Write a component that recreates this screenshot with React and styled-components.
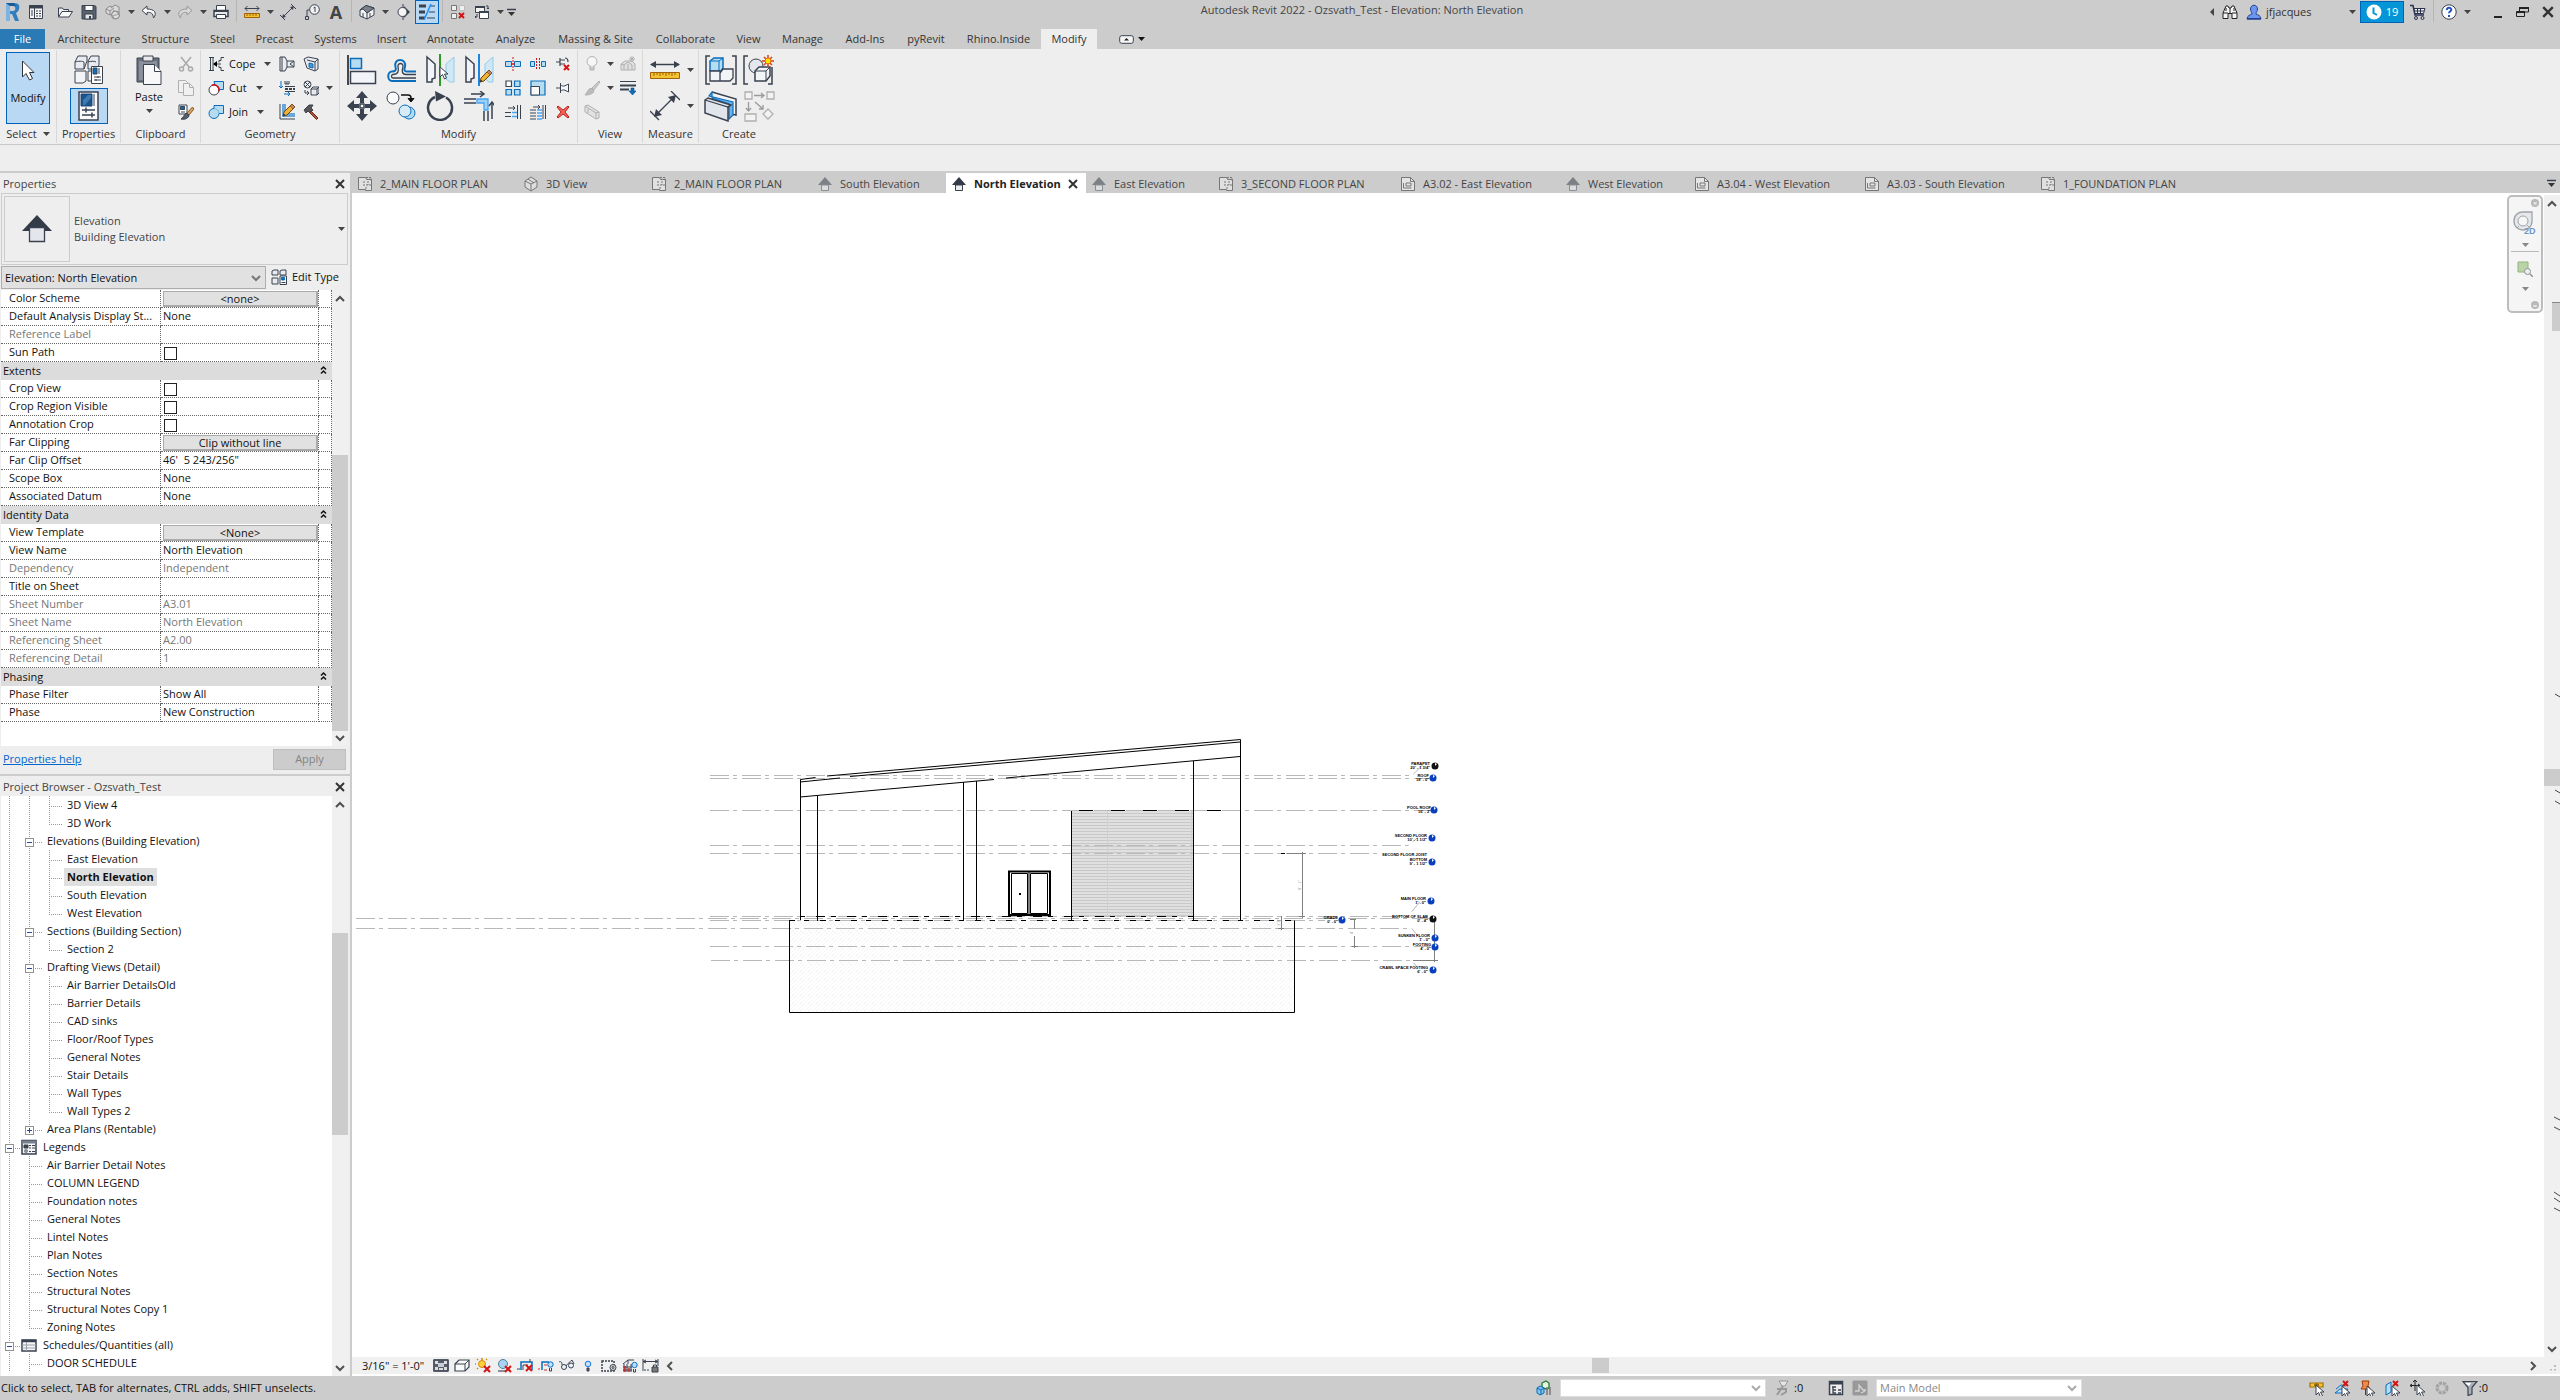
import React, { useState } from "react";
import styled, { createGlobalStyle, css } from "styled-components";

const INK = "#3a4250";
const BLUE = "#0a6ebd";
const SKY = "#b5dcf0";
const PALE = "#e9ebf0";
const GREY = "#b0b0b0";

/* ---------- icons ---------- */

const Svg = ({ s = 16, w, h, children }) => (
  <svg width={w || s} height={h || s} viewBox={`0 0 ${w || s} ${h || s}`} fill="none" stroke={INK} aria-hidden="true">
    {children}
  </svg>
);

const Caret = ({ color = "#444" }) => (
  <svg width="7" height="4" viewBox="0 0 7 4" aria-hidden="true"><path d="M0 0h7L3.500 4z" fill={color} /></svg>
);

const Chevron = ({ dir = "down", color = "#505050" }) => {
  const d = { down: "M1 3l4 4 4-4", up: "M1 7l4-4 4 4", left: "M7 1L3 5l4 4", right: "M3 1l4 4-4 4" }[dir];
  return <svg width="10" height="10" viewBox="0 0 10 10" fill="none" aria-hidden="true"><path d={d} stroke={color} strokeWidth="2" /></svg>;
};

const Cross = ({ size = 10, color = "#333" }) => (
  <svg width={size} height={size} viewBox="0 0 10 10" aria-hidden="true"><path d="M1 1l8 8M9 1L1 9" stroke={color} strokeWidth="2" /></svg>
);

const redX = (x, y, n = 6) => <path d={`M${x} ${y}l${n} ${n}M${x + n} ${y}l${-n} ${n}`} stroke="#d21414" strokeWidth="2" />;
const pointer = (x, y) => (
  <path transform={`translate(${x} ${y})`} d="M0 0v10l2.500-2.500L4.500 12l2-1-2-4H8z" fill="#fff" stroke={INK} strokeWidth="1" />
);
const pencil = (x, y) => (
  <g transform={`translate(${x} ${y})`}>
    <path d="M1 13l1-4 8-8 3 3-8 8z" fill="#f0b030" stroke="#6b4410" />
    <path d="M8 3l3 3 2-2-3-3z" fill="#c9806a" stroke="#6b4410" strokeWidth=".6" /><path d="M1 13l1-2 1 1z" fill="#222" />
  </g>
);

const I = {
  logo: (
    <Svg w={18} h={20}>
      <path d="M3 1h8c5 0 6 3 5 6 0 2-2 3-3 4l3 8h-4l-3-7H7v7H3z" fill="#2f7ec0" stroke="none" />
      <path d="M7 4h3c3 0 3 5 0 5H7z" fill="#cdcdcd" stroke="none" />
      <path d="M3 1l4 3v15H3z" fill="#7db3e0" stroke="none" /><path d="M3 1h8l2 3H7z" fill="#1b5a99" stroke="none" />
    </Svg>
  ),
  home: <Svg><path d="M1.500 1.500h13v13h-13z" fill="#f4f4f4" /><path d="M1 3h14" strokeWidth="3" /><path d="M6.500 4v10M3 7h2M3 9h2M3 11h2M8 7h2M11 7h2M8 9.500h2M11 9.500h2M8 12h2M11 12h2" /></Svg>,
  open: <Svg><path d="M1.500 13V4h4l1 1.500h5V8" fill="#ededed" /><path d="M1.500 13L5 7.500h10.500L12 13z" fill="#fafafa" /></Svg>,
  save: <Svg><path d="M1 1.500h12.500l1.500 1V15H1z" fill="#59616f" /><path d="M4 1.500h8v5H4z" fill="#fff" /><path d="M4 10h8v5H4z" fill="#e6e6e6" /><path d="M9 12v3" strokeWidth="2" /></Svg>,
  sync: <Svg><g stroke="#8c8c8c" fill="#d9d9d9"><path d="M1 5l4-3 4 2v5l-4 2-4-2z" /><path d="M6 4l4-3 4 2v6" /><path d="M1 5l4 2 4-3M5 7v4" /><circle cx="10.500" cy="11" r="4" fill="#aaa" /><path d="M8 11a2 2 0 0 1 4-1M13 11a2 2 0 0 1-4 1" stroke="#eee" /></g></Svg>,
  undo: <Svg><path d="M6 2L1 6.500 6 11V8.500c4-.5 6 .5 6.500 5.500 4-5 1-9-6.500-9z" fill="#fafafa" /></Svg>,
  redo: <Svg><path d="M10 2l5 4.500L10 11V8.500c-4-.5-6 .5-6.500 5.500C-.5 9 2.500 5 10 5z" fill="#d8d8d8" stroke="#999" /></Svg>,
  print: <Svg><path d="M3.500 6V1.500h9V6" fill="#fff" /><path d="M1 6.500h14v6H1z" fill="#e8e8e8" strokeWidth="1.500" /><path d="M3.500 10.500h9v4h-9z" fill="#fff" /><path d="M1 7h14" strokeWidth="2" /></Svg>,
  measure: <Svg><path d="M1 4.500h14M3.500 2L1 4.500 3.500 7M12.500 2L15 4.500 12.500 7" /><path d="M.5 9.500h15v4H.5z" fill="#f1c232" stroke="#a4610a" /><path d="M3 10v2M6 10v2M9 10v2M12 10v2" stroke="#a4610a" /></Svg>,
  dim: <Svg><path d="M3 13L13 3M0 11l5 5M11 0l5 5" /><path d="M2 14l1-4 3 3zM14 2l-1 4-3-3z" fill={INK} stroke="none" /></Svg>,
  tag: <Svg><circle cx="10.500" cy="5.500" r="4.800" fill="#f1f1f1" /><path d="M9.500 4l1.500-1v5M5.500 6H3v7M1.500 12.500h3v3h-3z" /></Svg>,
  house: <Svg><path d="M1 6l6-4.500L15 4v7l-7 4-7-3z" fill="#f2f2f4" /><path d="M1 6l3-2 4 5v6M8 9l7-5M4 9v4M11 9v4" /><path d="M1 6l3-1 4 4 7-5-8-2.500z" fill="#7b828e" /></Svg>,
  section: <Svg w={14}><path d="M7 0v16" /><path d="M8 2l6 6-6 6z" fill={INK} stroke="none" /><circle cx="6.500" cy="8" r="4.500" fill="#f4f4f4" /></Svg>,
  thin: <Svg w={18}><path d="M1 2h7M1 8h6M1 14h6" strokeWidth="3" /><path d="M12 2h5M11 8h6M9 14h8" /><path d="M13 0L6 16" stroke="#1e90ff" strokeWidth="1.500" /></Svg>,
  closeHidden: <Svg><path d="M1.500 1.500h5v5h-5zM1.500 9.500h5v5h-5z" fill="#efefef" stroke="#777" /><path d="M9.500 1.500h5v5h-5z" fill="#efefef" stroke="#bbb" />{redX(9, 9, 5)}</Svg>,
  switchWin: <Svg><path d="M1.500 2.500h9v6h-9z" fill="#f2f2f2" /><path d="M5.500 7.500h9v7h-9z" fill="#fff" /><path d="M5 8h10M1 3h10" strokeWidth="2" /><path d="M12 2h2v3M13 4l1 1 1-1M3 10v3h-2M2 12l-1 1 1 1" /></Svg>,
  customize: <Svg w={10} h={9}><path d="M0 1.500h9" strokeWidth="1.500" /><path d="M1 4h7L4.500 8z" fill="#333" stroke="none" /></Svg>,
  binoc: <Svg><path d="M1 9L4 2h2l1 2h2l1-2h2l3 7v5.500h-5V9.500H6v5H1z" fill="#f5f5f5" stroke="#222" /><path d="M1 9h5M10 9h5M4 4v3M12 4v3M8 4v5" stroke="#222" /></Svg>,
  user: <Svg><path d="M4.500 5c0-5 7-5 7 0 0 2-1 3-1.500 4v1c2 1 4.500 1.500 5 4.500H1c.5-3 3-3.500 5-4.500V9C5.500 8 4.500 7 4.500 5z" fill="#6c97f0" stroke="#23418e" /><path d="M1 15h14" stroke="#23418e" strokeWidth="1.500" /></Svg>,
  clock: <Svg><circle cx="8" cy="8" r="7.500" fill="#fff" stroke="none" /><path d="M7.500 3.500V9l3.500 2" stroke="#0696d7" strokeWidth="2" /></Svg>,
  cart: <Svg><path d="M0 1.500h3l2 9.500h9" stroke="#2a3050" strokeWidth="1.500" /><path d="M4 4.500h11l-1.500 5H5z" fill="#f1f1f1" stroke="#2a3050" /><path d="M7.500 5v4M10.500 5v4M4 7h10" stroke="#2a3050" /><circle cx="6" cy="14" r="1.500" stroke="#2a3050" /><circle cx="12.500" cy="14" r="1.500" stroke="#2a3050" /></Svg>,
  help: <Svg><circle cx="8" cy="8" r="7.200" fill="#fff" /><path d="M5.800 6c0-3 4.500-3 4.500-.3 0 1.500-2.300 1.600-2.300 3.600" stroke="#1f54c4" strokeWidth="2" /><path d="M8 11v2" stroke="#1f54c4" strokeWidth="2" /></Svg>,
  min: <Svg w={10} h={12}><path d="M1 11h8" stroke="#222" strokeWidth="2" /></Svg>,
  restore: <Svg w={13} h={12}><path d="M3.500 6V1.500h9V6H9" stroke="#222" /><path d="M3 2h10M1 6h8" stroke="#222" strokeWidth="2" /><path d="M.5 5.500h8v5h-8z" stroke="#222" /></Svg>,
  cursor: <Svg w={14} h={22}><path d="M1.500 1v16l3.500-3.500L8.500 20l3-1.500-3-6H13z" fill="#fff" stroke="#333" /></Svg>,
  typeProps: (
    <Svg w={30} h={30}>
      <path d="M4 1h9v5l-3 8H1V7z" fill={PALE} /><path d="M17 1h8v9l-3 4h-8V6z" fill={PALE} /><path d="M1 7c3-1 8-1 9 0v7M14 7c3-1 7-1 8 0" />
      <path d="M1 16h11v10l-3 2H1zM14 16h10v10H14z" fill="#f3f4f7" /><path d="M17.500 11.500h11v17h-11z" fill="#fff" />
      <path d="M19 13h4v6h-4z" fill={BLUE} /><path d="M25 13v6M20 22h7M20 25h7M24 21v2M22 24v2" />
    </Svg>
  ),
  props: (
    <Svg w={21} h={30}>
      <path d="M1 1h19v28H1z" fill="#fbfbfb" strokeWidth="1.500" /><path d="M3 3h11v12H3z" fill="#1f5285" stroke="#174a80" /><path d="M16 3v12" stroke="#9a9fa8" strokeWidth="2" />
      <path d="M5 9l5-5h3v3l-6 7H5z" fill="#3d7ab2" stroke="none" /><path d="M4 19h13M4 24h13M8 16.500v5M14 21.500v5" strokeWidth="1.500" />
    </Svg>
  ),
  paste: (
    <Svg w={26} h={30}>
      <path d="M1 3h22v24H1z" fill="#6a717e" /><path d="M3 6h18v19H3z" fill="#8a909b" stroke="none" /><path d="M7 1h10v5H7z" fill="#e9e9e9" />
      <path d="M7.500 9.500h11l6.500 7v13H7.500z" fill="#f7f7f9" /><path d="M18.500 9.500v7H25" fill="#fff" />
    </Svg>
  ),
  cut: <Svg><g stroke="#a9a9a9" strokeWidth="1.500"><path d="M3 1l8 10M13 1L5 11" /><circle cx="3.500" cy="13" r="2" /><circle cx="12.500" cy="13" r="2" /></g></Svg>,
  copy: <Svg><g stroke={GREY} fill="#f0f0f0"><path d="M.5.500h7l3 3v9H.5z" /><path d="M5.500 3.500h6l4 4v8h-10zM11.500 3.500v4h4" /></g></Svg>,
  match: <Svg><path d="M1 1h8v9H1z" fill="#fff" /><path d="M2.500 2.500h4v3h-4z" fill={BLUE} /><path d="M3 8h4" /><path d="M14.500 3L9 9l2 2 5-6z" fill="#d9a066" stroke="#8c5a20" /><path d="M8 9l3 2c0 3-4 5-8 4 2-1 3-4 5-6z" fill="#555d6b" /></Svg>,
  cope: <Svg><path d="M1 1.500h5M1 14.500h5M2.500 2v12M5 2v12M16 1.500h-3v3h-2v2M16 14.500h-3v-3h-2v-2M6 8h7" /><path d="M5 8l4-3v6z" fill="#000" stroke="none" /></Svg>,
  cutGeo: <Svg><path d="M6 1.500h9.500v8H8z" fill={SKY} stroke={BLUE} /><circle cx="6" cy="10" r="5" fill="#fff" /><path d="M4 5.300a5 5 0 0 1 6.800 6" stroke="#d21414" strokeWidth="1.500" /></Svg>,
  join: <Svg><path d="M6 1.500h9.500v8H11a5 5 0 1 1-5-5z" fill={SKY} stroke={BLUE} /><path d="M6 4.500a5 5 0 0 1 5 5" stroke="#6fb3de" /></Svg>,
  wallJoin: <Svg><path d="M1 1h5l2 4h7v6H8l-2 4H1z" fill={PALE} /><path d="M3 1v14M8 5v6M15 5l-4 3 4 3" /></Svg>,
  face: <Svg><path d="M1 3l4-2 10 2v10l-3 2-8-3z" fill={PALE} /><path d="M4 4l8 2v9M12 6l3-3" /><path d="M6 7l4 1v4l-4-1z" fill="#4a97d0" stroke={BLUE} /></Svg>,
  beamJoin: <Svg><path d="M6 6.500h10M6 11.500h10" /><path d="M6 9h10" strokeWidth="2" strokeDasharray="3 1" /><path d="M2 1v7M0 6l2 2 2-2M5 14h6M9 12l2 2-2 2" stroke={BLUE} /><path d="M6 1v3h2V1M8 4h2V1" /></Svg>,
  splitFace: <Svg><circle cx="4.500" cy="4.500" r="3.500" fill="#eee" /><path d="M2 2l5 5M7 2L2 7M2 10v3h4M4 11l2 2-2 2" /><path d="M8 9l2-2h6v6l-2 2H8z" fill={PALE} /><path d="M8 9h6v6M14 9l2-2" /></Svg>,
  paint: <Svg><path d="M1 0v15h15" /><path d="M4 0v12h12M6 0v10h10" stroke="#3c8fd0" strokeWidth="1.500" />{pencil(3, -1)}</Svg>,
  hammer: <Svg><path d="M1 6l5-5h4L8 4l2 2-3 3-2-2-2 2z" fill="#555" /><path d="M8 7l7 7-1.500 1.500L7 9z" fill="#b4543a" stroke="#6b2b1b" /></Svg>,
  align: <Svg s={30}><path d="M1 0v30" stroke="#111" strokeWidth="1.500" /><path d="M3.500 3.500h11v10h-11z" fill={SKY} stroke={BLUE} strokeWidth="1.500" /><path d="M3.500 16.500h25v12h-25z" fill="#f3f4f7" strokeWidth="1.500" /></Svg>,
  offset: (
    <Svg w={30} h={28}>
      <path d="M30 15.500h-9c-3 0-3-2-2-4.500C21 1.500 7 1.500 9.500 11c1 3 0 4.500-3.500 4.500-5 0-5 9.500 0 9.500h24" stroke={BLUE} strokeWidth="2" />
      <path d="M30 18.500H20c-4.500 0-4-4-3-8 .5-4-5.500-4-5 0 1 5 0 8-5 8-2 0-2 3.500 0 3.500h23" strokeWidth="1.300" />
    </Svg>
  ),
  mirrorPick: <Svg w={30} h={32}><path d="M2 3l8 7v14l-3 1v3H2z" fill="#f3f4f7" strokeWidth="1.500" /><path d="M29 3l-8 7v15l4 3h4z" fill="#cfe8f5" stroke="#93cbea" /><path d="M15 0v32" stroke="#2a9a20" strokeWidth="2" />{pointer(15, 13)}</Svg>,
  mirrorDraw: <Svg w={30} h={32}><path d="M2 3l8 7v14l-3 1v3H2z" fill="#f3f4f7" strokeWidth="1.500" /><path d="M29 3l-8 7v15l4 3h4z" fill="#cfe8f5" stroke="#93cbea" /><path d="M15 0v32" stroke="#1b86e0" strokeWidth="2" />{pencil(15, 15)}</Svg>,
  move: <Svg s={30}><g fill={INK} stroke="none"><path d="M15 0l6 7h-4v5h-4V7H9zM15 30l6-7h-4v-5h-4v5H9zM0 15l7-6v4h5v4H7v4zM30 15l-7-6v4h-5v4h5v4z" /></g><path d="M13 13h4v4h-4z" fill="#fff" strokeWidth="1.500" /></Svg>,
  copyTool: <Svg s={30}><circle cx="7" cy="7" r="6" fill="#fafafa" /><path d="M15 4h7c2 0 3 1 3 3v3" stroke="#111" strokeWidth="1.500" /><path d="M22 7.500l3 3.500 3-3.500z" fill="#111" stroke="#111" /><circle cx="23" cy="22" r="6" fill={SKY} stroke={BLUE} /><circle cx="19" cy="20" r="6" fill="#d5ecf8" stroke={BLUE} /></Svg>,
  rotate: <Svg s={30}><path d="M21 6.500a12 12 0 1 1-11-.5" strokeWidth="2.500" /><path d="M10 0l11 5.500-10 5z" fill={INK} stroke="none" /></Svg>,
  trim: (
    <Svg s={30}>
      <path d="M0 8h12M0 12h12M20 20v10M24 20v10" strokeWidth="1.500" /><path d="M13 8h11v11h-4v-7h-7z" fill="#9fd0f5" stroke="#46a5f5" strokeWidth="1.300" />
      <path d="M7 3h13M28 28V12" strokeWidth="1.500" /><path d="M16 0l4 3-4 3M25 15l3-4 3 4" strokeWidth="1.500" />
    </Svg>
  ),
  split: <Svg><path d="M.5 5.500h6v5h-6zM9.500 5.500h6v5h-6z" fill={SKY} stroke={BLUE} /><path d="M8 1v14" stroke="#d21414" strokeDasharray="2 1" /><path d="M6 8h4" stroke="#d21414" /></Svg>,
  splitGap: <Svg><path d="M.5 5.500h4v5h-4zM11.500 5.500h4v5h-4z" fill={SKY} stroke={BLUE} /><path d="M6.500 2v12M9.500 2v12" stroke="#d21414" strokeDasharray="2 1" /></Svg>,
  unpin: <Svg><path d="M1 6h4M5 2v8M5 4h5M5 8h5M10 2c2 0 3 1 3 4" strokeWidth="1.200" />{redX(9, 9, 5)}</Svg>,
  array: <Svg><g strokeWidth="1.200"><path d="M1 1h5.500v5.500H1z" fill="#fff" /><g fill={SKY} stroke={BLUE}><path d="M9.500 1H15v5.500H9.500zM1 9.500h5.500V15H1zM9.500 9.500H15V15H9.500z" /></g></g></Svg>,
  scale: <Svg><path d="M1 1h14v14H1z" fill={SKY} stroke={BLUE} strokeWidth="1.200" /><path d="M1 6.500h8.500V15H1z" fill="#fafafa" /></Svg>,
  pin: <Svg><path d="M1 8h4M5.500 3v10M5.500 5c3 2 4 1 8-1v8c-4-2-5-3-8-1" fill="#f6f6f6" /></Svg>,
  trimOne: <Svg><path d="M0 8.500h6M0 12.500h6M12.500 1v14M15.500 1v14M3 4h7M8 2l2 2-2 2" /><path d="M7 8.500h5M7 12.500h5" stroke="#46a5f5" strokeWidth="1.500" /></Svg>,
  trimMany: <Svg><path d="M0 6h6M0 9h6M0 12h6M0 15h6M13 1v14M15.500 1v14M3 3h7M8 1l2 2-2 2" /><path d="M7 6h5M7 9h5M7 12h5M7 15h5" stroke="#46a5f5" strokeWidth="1.500" /></Svg>,
  del: <Svg w={14} h={14}><path d="M1 2l1-1 5 4 5-4 1 1-4 5 4 5-1 1-5-4-5 4-1-1 4-5z" fill="#f0655a" stroke="#c02020" /></Svg>,
  bulb: <Svg><g stroke={GREY}><circle cx="8" cy="5.500" r="5" fill="#f6f6f6" /><path d="M6 10v4h4v-4M6 12h4" fill="#ddd" /></g></Svg>,
  brush: <Svg><path d="M15 1L8 8l2 2 6-8z" fill="#ccc" stroke={GREY} /><path d="M7 8l3 3c-1 3-5 4-9 4 2-2 3-6 6-7z" fill="#bbb" stroke={GREY} /></Svg>,
  box3d: <Svg><g stroke={GREY} fill="#e2e2e2"><path d="M1 2l3-1 11 7v6l-3 1L1 8z" /><path d="M1 2l11 7v6M12 9l3-1M4 5v4" /></g></Svg>,
  hideHouse: <Svg><g stroke={GREY} fill="#e0e0e0"><path d="M1 8l4-3h7l3 3v6H1z" /><path d="M4 9v5M8 8v6M12 9v5M1 8l3 1 4-3 4 3" /><path d="M12 0v6M9 3h6M10 1l4 4M14 1l-4 4" /></g></Svg>,
  lineWork: <Svg><path d="M0 1.500h16" /><path d="M0 5.500h16" strokeWidth="2" /><path d="M0 9.500h9" strokeWidth="2" /><path d="M11 8h3v3h2l-3.500 4L9 11h2z" fill={BLUE} stroke="#0a4c8c" strokeWidth=".6" /></Svg>,
  measureBig: <Svg w={30} h={20}><path d="M1 4.500h28" strokeWidth="1.500" /><path d="M0 4.500L6 1v7zM30 4.500L24 1v7z" fill={INK} stroke="none" /><path d="M.5 12.500h29v6H.5z" fill="#f1c232" stroke="#a4610a" /><path d="M4 13v3M7 13v2M10 13v3M13 13v2M16 13v3M19 13v2M22 13v3M25 13v2" stroke="#a4610a" /></Svg>,
  dimBig: <Svg s={30}><path d="M5 25L25 5M0 20l9 9M21 0l9 9" strokeWidth="1.300" /><path d="M4 26l2-8 6 6zM26 4l-2 8-6-6z" fill={INK} stroke="none" /></Svg>,
  group: (
    <Svg w={32} h={30}>
      <path d="M5 1H1v28h4M27 1h4v28h-4" strokeWidth="1.500" /><path d="M5 6l4-3h9v10l-2 3H5z" fill={SKY} stroke={BLUE} strokeWidth="1.500" /><path d="M5 6h9v10M14 6l4-3" stroke={BLUE} />
      <path d="M5 16h10v10H5zM15 18l3-4h10v9l-3 3H15z" fill="#f3f4f7" strokeWidth="1.300" />
    </Svg>
  ),
  similar: (
    <Svg w={32} h={30}>
      <path d="M5 1H1v28h4M25 29h4V12" strokeWidth="1.500" /><circle cx="13" cy="11" r="7" fill="#e4e7ee" /><path d="M12 16l4-4h11v9l-4 5H12z" fill="#f3f4f7" strokeWidth="1.500" /><path d="M12 16h11v10M23 16l4-4" />
      <path d="M25 0v12M19 6h12M21 2l8 8M29 2l-8 8" stroke="#d2401c" strokeWidth="1.500" /><circle cx="25" cy="6" r="3" fill="#ffe100" stroke="#e36a10" />
    </Svg>
  ),
  assembly: (
    <Svg w={34} h={31}>
      <path d="M8 1l24 7v16l-5-1" fill="#f3f4f7" strokeWidth="1.500" /><path d="M8 1v6l17 6v15l4-4V11L5 5z" fill="#6ab3ea" stroke={BLUE} strokeWidth="1.200" /><path d="M1 9l3-2 23 7-3 2v14L1 22z" fill="#e1e4ea" strokeWidth="1.500" /><path d="M1 9l23 7 3-2" strokeWidth="1.200" />
    </Svg>
  ),
  parts: <Svg w={31} h={31}><g stroke={GREY} fill="#f3f3f3" strokeWidth="1.300"><path d="M1 1h7v7H1zM23 1h7v7h-7zM1 23h11v7H1zM24 18l5 5-5 5-5-5z" /><g stroke="#9a9a9a" fill="none"><path d="M10 4.500h10M17 2l3 2.500L17 7M4.500 11v9M2 17l2.500 3L7 17M11 11l8 7M15 18h4v-4" /></g></g></Svg>,
  ribbonMode: <Svg w={15} h={9}><rect x=".7" y=".7" width="13.600" height="7.600" rx="2" fill="#f5f5f5" /><path d="M5 5.500h5L7.500 3z" fill="#222" stroke="none" /></Svg>,
  plan: <Svg><g stroke="#777"><path d="M1.500 1.500h7l1 2h5v11h-6v-1h-7z" fill="#e0e0e0" /><path d="M9 1.500h5v3M6 6h2M11 5v4M6 9h8M9 11v3" strokeDasharray="2 1" /></g></Svg>,
  view3d: <Svg><g stroke="#777"><path d="M2 5l6-4 6 4v6l-6 4-6-4z" fill="#dedede" /><path d="M2 5l6 3 6-3M8 8v7M5 3l6 4" /></g></Svg>,
  elevGrey: <Svg w={14} h={14}><path d="M0 8l7-8 7 8z" fill="#7d8086" stroke="none" /><path d="M3.500 8h7v5.500h-7z" fill="#dcdcdc" stroke="#8b8e94" /></Svg>,
  elevDark: <Svg w={14} h={14}><path d="M0 8l7-8 7 8z" fill="#333a48" stroke="none" /><path d="M3.500 8h7v5.500h-7z" fill="#ececf0" /></Svg>,
  elevBig: <Svg w={30} h={28}><path d="M0 16L15 0l15 16z" fill="#333a48" stroke="none" /><path d="M7.500 12.500h15v14h-15z" fill="#e4e6ec" strokeWidth="1.300" /></Svg>,
  sheet: <Svg><g stroke="#777"><path d="M1.500 1.500h9l4 4v9h-13z" fill="#e4e4e4" /><path d="M10.500 1.500v4h4M3.500 7v5h8M6 7v3h5V7z" /></g></Svg>,
  legend: <Svg><path d="M1 1.500h14v13.500H1z" fill="#f6f6f6" strokeWidth="1.500" /><path d="M1 3h14" stroke="#76808f" strokeWidth="3" /><path d="M3 6h4v3H3z" fill={INK} /><circle cx="5" cy="12" r="1.600" fill="#8b8f98" stroke="#8b8f98" /><path d="M8 6.500h2M11 6.500h3M8 9h2M11 9h3M8 12.500h2M11 12.500h3" /></Svg>,
  schedule: <Svg w={16} h={13}><path d="M1 1h14v11H1z" fill="#f6f6f6" strokeWidth="1.500" /><path d="M1 2h14" strokeWidth="2.500" /><path d="M5.500 3v9M1 6h14M1 9h14" stroke="#9aa0aa" /></Svg>,
  editType: <Svg><path d="M1 2l2-1h4v5H1zM9 2l2-1h4v5H9zM1 9h6v6H1z" fill={PALE} /><path d="M9 7h6.500v8.500H9z" fill="#fff" /><path d="M10.500 8.500h3v2.500h-3z" fill={BLUE} stroke={BLUE} /><path d="M10.500 13.500h4" /></Svg>,
  detail: <Svg w={16} h={13}><path d="M.7.700h14.600v11.600H.7z" fill="#555d6b" /><path d="M2 2h3v3H2zM11 2h3v3h-3zM2 8h3v3H2zM6 9h4v2H6zM11 8h3v3h-3z" fill="#ddd" stroke="none" /><path d="M5 4h6v4H5z" fill="#c9ced6" stroke="none" /></Svg>,
  visual: <Svg><path d="M1 6l4-4h10v7l-4 4H1z" fill="#fafafa" strokeWidth="1.200" /><path d="M1 6h10v7M11 6l4-4" /></Svg>,
  sun: <Svg><circle cx="7" cy="6" r="3.500" fill="#ffd23c" stroke="#d28a00" /><path d="M7 0v2M1 6H0M3 2L2 1M11 2l1-1M3 10l-1 1" stroke="#d28a00" strokeWidth="1.500" />{redX(9, 8)}</Svg>,
  shadow: <Svg><circle cx="7" cy="6" r="4.500" fill="#a9d4f0" stroke="#4c7da0" /><path d="M2 13h8" strokeWidth="2" stroke="#8b8f98" />{redX(9, 8)}</Svg>,
  crop: <Svg><path d="M4 12V4h11v8" stroke={BLUE} strokeWidth="1.500" /><path d="M0 11h3M6 12v-5h5M13 1v3" />{redX(9, 7)}</Svg>,
  cropShow: <Svg><path d="M4 12V4h7" stroke={BLUE} strokeWidth="1.500" /><path d="M0 11h2M6 12h3M6 7h3" stroke="#c33" /><circle cx="12.500" cy="6.500" r="2.700" fill="#bfe0ff" stroke={BLUE} /><path d="M11.500 10v3h2v-3" /></Svg>,
  glasses: <Svg><path d="M0 4c2-1 3 0 3 3M7 8c2-3 4-4 6-6l2 4" /><circle cx="5" cy="9" r="2.500" fill="#eaf4fb" /><circle cx="12" cy="7.500" r="2.500" fill="#eaf4fb" /></Svg>,
  reveal: <Svg w={10}><circle cx="5" cy="6" r="2.800" fill="#c4e2ff" stroke="#1b76d0" /><path d="M4 10h2v3H4z" fill="#555" /></Svg>,
  tempView: <Svg><path d="M1 3h12v10H1z" strokeWidth="1.500" strokeDasharray="2 1" /><circle cx="12" cy="9.500" r="3" fill="#ddd" /><circle cx="12" cy="9.500" r="1" /></Svg>,
  analytic: <Svg><path d="M1 6l5-4h6M2 6v8M5 6v8M9 6v8M1 9h9M1 12h9M6 2v4" /><path d="M3 8v6M7 10v4" stroke="#c22" strokeWidth="1.500" /><circle cx="12.500" cy="7" r="2.700" fill="#bfe0ff" stroke={BLUE} /><path d="M11.500 11v3h2v-3" /></Svg>,
  constraint: <Svg w={17}><path d="M1 1v12M16 1v7M1 3.500h15M4 2L1 3.500 4 5M13 2l3 1.500L13 5" /><path d="M2 12h6" strokeDasharray="2 1" /><path d="M10 9h6v5h-6z" fill="#777" /><path d="M11.500 9V7h3v2" /></Svg>,
  workset: <Svg><path d="M6 3l4-2 3 2v5l-3 1-4-2z" fill="#e6f5e6" stroke="#1e7a28" strokeWidth="1.300" /><path d="M1 8l3-2 4 2v5l-4 2-3-2z" fill="#7fc3ee" stroke={BLUE} /><path d="M1 8l4 2 3-2M5 10v5" stroke={BLUE} /><path d="M11 7v8M14 7v8" strokeWidth="1.500" stroke="#777" /></Svg>,
  requests: <Svg><path d="M5 1h9l-3 5H8z" fill="#e4e4e4" stroke="#999" /><path d="M9 6l-6 9M3 9h9v3l-5 3" stroke="#999" strokeWidth="2" /></Svg>,
  options: <Svg><path d="M1.500 1.500h13v13h-13z" fill="#eee" strokeWidth="1.500" /><path d="M1 3h14" strokeWidth="3" /><path d="M4 7h4M5 7v6h3M5 10h3M10 10h3M10 13h3" strokeWidth="1.300" /></Svg>,
  exclude: <Svg><path d="M1 1h14v14H1z" fill="#999" stroke="#999" /><path d="M3 11h4v-6l4 5h3M9 13l4-2" stroke="#d4d4d4" strokeWidth="1.300" /></Svg>,
  selLinks: <Svg><path d="M1 3h6v4H1zM8 3h6v4H8z" fill="#f5c433" stroke="#a36f00" strokeWidth="1.200" /><path d="M5 5h5" stroke="#a36f00" strokeWidth="2" />{pointer(7, 5)}</Svg>,
  selUnder: <Svg><path d="M1 13l5-4h8l-3 4zM2 9l5-4 5 1" fill={SKY} stroke={BLUE} />{redX(9, 1, 5)}{pointer(8, 6)}</Svg>,
  selPinned: <Svg><path d="M3 1h7l-1 5 2 3H2l2-3z" fill="#f08a4a" stroke="#a33c0a" /><path d="M6.500 9v6" />{pointer(8, 6)}</Svg>,
  selFace: <Svg><path d="M2 5l5-3v10l-5 3z" fill={SKY} stroke={BLUE} />{redX(9, 1, 5)}{pointer(8, 6)}</Svg>,
  dragSel: <Svg><path d="M6 0v11M1 5.500h10M4 2l2-2 2 2M3 4L1 5.500 3 7M9 4l2 1.500" stroke="#222" />{pointer(8, 5)}</Svg>,
  gear: <Svg><circle cx="8" cy="8" r="5" stroke="#a2a2a2" strokeWidth="3" strokeDasharray="3 1" /><circle cx="8" cy="8" r="3.500" stroke="#b5b5b5" /></Svg>,
  filter: <Svg><path d="M1 1.500h14l-5 6V14l-4 1.500v-8z" fill="#a9b0bc" strokeWidth="1.200" /><path d="M3 3h6L7 6z" fill="#fff" stroke="none" /></Svg>,
  wheel2d: (
    <Svg w={24} h={24}>
      <g stroke="#9fa3a8"><path d="M10 1h9v9c0 12-18 12-18 0 0-6 4-9 9-9z" fill="#e6e7ea" strokeWidth="1.300" /><circle cx="10" cy="10" r="5" fill="#f6f6f6" /><path d="M6 15l-2 2M14 14l4 4" /></g>
      <text x="11" y="23" fontSize="9" fontFamily="Liberation Sans, sans-serif" fontWeight="bold" fill="#6f97c4" stroke="none">2D</text>
    </Svg>
  ),
  zoomRegion: <Svg><path d="M1 1h10v10H1z" fill="#bcd3a8" stroke="#8fb57a" /><circle cx="10.500" cy="10.500" r="3" fill="#eee" stroke="#8d9298" /><path d="M13 13l3 3" stroke="#8d9298" strokeWidth="1.500" /></Svg>,
  collapse: <Svg w={9} h={10}><path d="M2 4.500L4.500 2 7 4.500M2 8.500L4.500 6 7 8.500" stroke="#111" strokeWidth="1.500" /></Svg>,
};

/* ---------- data ---------- */

const quickAccess = [
  ["home", "Home"], ["gap"], ["open", "Open"], ["save", "Save"], ["sync", "Synchronize"], ["more"],
  ["undo", "Undo"], ["more"], ["redo", "Redo"], ["more"], ["print", "Print"], ["sep"],
  ["measure", "Measure"], ["more"], ["dim", "Aligned dimension"], ["tag", "Tag by category"], ["text", "Text"], ["sep"],
  ["house", "Default 3D view"], ["more"], ["section", "Section"], ["thin", "Thin lines"], ["sep"],
  ["closeHidden", "Close inactive views"], ["switchWin", "Switch windows"], ["more"],
];

const ribbonTabs = [
  ["Architecture", 84], ["Structure", 69], ["Steel", 45], ["Precast", 59], ["Systems", 63], ["Insert", 49], ["Annotate", 69],
  ["Analyze", 61], ["Massing & Site", 99], ["Collaborate", 81], ["View", 45], ["Manage", 63], ["Add-Ins", 62], ["pyRevit", 60],
  ["Rhino.Inside", 85], ["Modify", 56],
];

const docTabs = [
  ["plan", "2_MAIN FLOOR PLAN", 166], ["view3d", "3D View", 128], ["plan", "2_MAIN FLOOR PLAN", 166], ["elevGrey", "South Elevation", 134],
  ["elevDark", "North Elevation", 140], ["elevGrey", "East Elevation", 127], ["plan", "3_SECOND FLOOR PLAN", 182], ["sheet", "A3.02 - East Elevation", 165],
  ["elevGrey", "West Elevation", 129], ["sheet", "A3.04 - West Elevation", 170], ["sheet", "A3.03 - South Elevation", 176], ["plan", "1_FOUNDATION PLAN", 170],
];

const properties = [
  { name: "Color Scheme", button: "<none>" },
  { name: "Default Analysis Display St...", value: "None" },
  { name: "Reference Label", value: "", dim: true },
  { name: "Sun Path", check: true },
  { group: "Extents" },
  { name: "Crop View", check: true },
  { name: "Crop Region Visible", check: true },
  { name: "Annotation Crop", check: true },
  { name: "Far Clipping", button: "Clip without line" },
  { name: "Far Clip Offset", value: "46'  5 243/256\"" },
  { name: "Scope Box", value: "None" },
  { name: "Associated Datum", value: "None" },
  { group: "Identity Data" },
  { name: "View Template", button: "<None>" },
  { name: "View Name", value: "North Elevation" },
  { name: "Dependency", value: "Independent", dim: true },
  { name: "Title on Sheet", value: "" },
  { name: "Sheet Number", value: "A3.01", dim: true },
  { name: "Sheet Name", value: "North Elevation", dim: true },
  { name: "Referencing Sheet", value: "A2.00", dim: true },
  { name: "Referencing Detail", value: "1", dim: true },
  { group: "Phasing" },
  { name: "Phase Filter", value: "Show All" },
  { name: "Phase", value: "New Construction" },
];

// guides: v = line through, t = branch, l = last branch, + / - = toggle
const tree = [
  ["vvt", "3D View 4"], ["vvl", "3D Work"],
  ["v-", "Elevations (Building Elevation)"], ["vvt", "East Elevation"], ["vvt", "North Elevation"], ["vvt", "South Elevation"], ["vvl", "West Elevation"],
  ["v-", "Sections (Building Section)"], ["vvl", "Section 2"],
  ["v-", "Drafting Views (Detail)"], ["vvt", "Air Barrier DetailsOld"], ["vvt", "Barrier Details"], ["vvt", "CAD sinks"], ["vvt", "Floor/Roof Types"],
  ["vvt", "General Notes"], ["vvt", "Stair Details"], ["vvt", "Wall Types"], ["vvl", "Wall Types 2"],
  ["v+", "Area Plans (Rentable)"],
  ["-", "Legends", "legend"], ["vt", "Air Barrier Detail Notes"], ["vt", "COLUMN LEGEND"], ["vt", "Foundation notes"], ["vt", "General Notes"],
  ["vt", "Lintel Notes"], ["vt", "Plan Notes"], ["vt", "Section Notes"], ["vt", "Structural Notes"], ["vt", "Structural Notes Copy 1"], ["vl", "Zoning Notes"],
  ["-", "Schedules/Quantities (all)", "schedule"], ["vt", "DOOR SCHEDULE"],
];

const viewControls = [
  ["detail", "Detail level"], ["visual", "Visual style"], ["sun", "Sun path off"], ["shadow", "Shadows off"], ["crop", "Do not crop view"], ["cropShow", "Show crop region"],
  ["glasses", "Temporary hide"], ["reveal", "Reveal hidden elements"], ["tempView", "Temporary view properties"], ["analytic", "Analytical model"], ["constraint", "Reveal constraints"],
];

const selectTools = [
  ["selLinks", "Select links"], ["selUnder", "Select underlay elements"], ["selPinned", "Select pinned elements"], ["selFace", "Select elements by face"],
  ["dragSel", "Drag elements on selection"], ["gear", "Background processes"],
];

/* ---------- drawing on the canvas ---------- */

const levels = [
  "M710 775.500H1412l11-11", "M710 778.500H1430", "M710 810.500H1430", "M710 845.500H1408l10-8", "M710 853.500H1382",
  "M710 916.500H1408l12-15", "M356 918.500H1430", "M710 920.500H1325", "M356 928.500H1412l7 9", "M710 946.500H1430", "M711 960.500H1412l6 8",
];

const NAVY = "#0a3fbd";

const heads = [
  [1430, 765, "PARAPET", "20' - 1 3/4\"", 1435, "#111"], [1429, 777, "ROOF", "18' - 0\"", 1433, NAVY], [1431, 809, "POOL ROOF", "16' - 2\"", 1434, NAVY],
  [1427, 837, "SECOND FLOOR", "10' - 1 1/2\"", 1432, NAVY], [1427, 861, "BOTTOM", "9' - 1 1/2\"", 1432, NAVY], [1426, 900, "MAIN FLOOR", "1' - 0\"", 1431, NAVY],
  [1428, 918, "BOTTOM OF SLAB", "0' - 4\"", 1433, "#111"], [1338, 919, "GRADE", "0' - 0\"", 1342, NAVY], [1430, 937, "SUNKEN FLOOR", "1' - 0\"", 1435, NAVY],
  [1431, 946, "FOOTING", "4' - 0\"", 1435, NAVY], [1428, 969, "CRAWL SPACE FOOTING", "6' - 0\"", 1433, NAVY],
];

const Drawing = () => (
  <Sheet role="img" aria-label="North elevation drawing" fill="none">
    <defs>
      <pattern id="earth" width="8" height="8" patternUnits="userSpaceOnUse">
        <path d="M0 4l4-4M0 8l8-8M4 8l4-4M0 2l4 4" stroke="#f0f0f0" strokeWidth=".6" />
      </pattern>
      <pattern id="slats" width="8" height="3" patternUnits="userSpaceOnUse">
        <path d="M0 0h8v3H0z" fill="#e0e0e0" /><path d="M0 .5h8" stroke="#c8c8c8" />
      </pattern>
    </defs>
    <g transform="translate(-352 -193)">
      <path d="M789.500 920.500H1294.500V1012.500H789.500z" fill="url(#earth)" />
      <path d="M1071 811h122v106h-122z" fill="url(#slats)" />
      <path d="M1107.500 811v106M1191.500 811v106" stroke="#d0d0d0" />
      <g stroke="#b8b8b8" strokeDasharray="19 4 4 5">
        {levels.map((d) => <path key={d} d={d} />)}
      </g>
      <g stroke="#000">
        <path d="M789.500 920.500V1012.500H1294.500V920.500" />
        <path d="M800.500 920V779.500l15-2M827 776L1240.500 739.500V920" />
        <path d="M800 782L840 778M850 776.500L1240 742" />
        <path d="M800 797L994 779.500M1006 778L1240 756.500" />
        <path d="M817.500 796v125M963.500 782v139M976.500 781v140M1193.500 761v160M1071.500 811v109" />
        <path d="M1079 810.500h144" strokeDasharray="14 18" />
        <path d="M800 916.500h394" strokeDasharray="5 11 9 6" />
        <path d="M789 920.500h505" strokeDasharray="6 9 5 11" />
      </g>
      <path d="M1009 871.500h41V915h-41z" stroke="#000" strokeWidth="2" fill="#fff" />
      <path d="M1011.500 873.500h16v40h-16zM1030.500 873.500h17v40h-17zM1029 871v44" stroke="#000" />
      <path d="M1020 893v2" stroke="#000" strokeWidth="2" />
      <g stroke="#808080">
        <path d="M1302.500 852v66M1287 853.500h19M1299 916.500h6M1281.500 916v14M1278 928.500h6M1354.500 919v10M1354.500 936v12M1352 946.500h6M1350 919.500h6M1434.500 921v41M1413 960.500h25" />
        <path d="M1281 853.500h4" stroke="#000" />
      </g>
      <g fontFamily="Liberation Sans, sans-serif" fontSize="4" fill="#888">
        <text transform="translate(1301 890) rotate(-90)">9' - 1"</text>
        <text transform="translate(1280 926) rotate(-90)">1' 0"</text>
        <text transform="translate(1353 934) rotate(-90)">4'</text>
      </g>
      <g fontFamily="Liberation Sans, sans-serif" fontSize="4" fontWeight="bold" textAnchor="end" fill="#000">
        <text x="1427" y="856">SECOND FLOOR JOIST</text>
        {heads.map(([x, y, name, height, cx, color]) => (
          <g key={name}>
            <text x={x} y={y}>{name}</text>
            <text x={x} y={y + 4}>{height}</text>
            <circle cx={cx} cy={y + 1} r="3.500" fill={color} />
            <path d={`M${cx} ${y + 1}v-3l2 1z`} fill="#fff" />
          </g>
        ))}
      </g>
    </g>
  </Sheet>
);

/* ---------- components ---------- */

const IconButton = ({ icon, label, slot, on, ...rest }) => (
  <Tool type="button" aria-label={label} title={label} $slot={slot} $on={on} {...rest}>{I[icon]}</Tool>
);

const More = ({ label = "More options" }) => <Arrow type="button" aria-label={label}><Caret /></Arrow>;

const QuickAccess = () => (
  <Row>
    <IconButton icon="logo" label="Revit" />
    {quickAccess.map(([icon, label], i) => {
      if (icon === "gap") return <Gap key={i} />;
      if (icon === "sep") return <Sep key={i} />;
      if (icon === "more") return <More key={i} />;
      if (icon === "text") return <Tool key={i} type="button" aria-label={label}><BigA>A</BigA></Tool>;
      return <IconButton key={i} icon={icon} label={label} on={icon === "thin"} />;
    })}
    <IconButton icon="customize" label="Customize" slot={12} />
  </Row>
);

const RibbonPanels = () => (
  <Ribbon>
    <Panel $w={57}>
      <Tools $pad={6}><ModifyButton type="button">{I.cursor}<span>Modify</span></ModifyButton></Tools>
      <PanelLabel>Select <Caret /></PanelLabel>
    </Panel>
    <Panel $w={64}>
      <Tools $center>
        <Column>
          <IconButton icon="typeProps" label="Type properties" slot={38} data-big />
          <IconButton icon="props" label="Properties" slot={38} data-big on />
        </Column>
      </Tools>
      <PanelLabel>Properties</PanelLabel>
    </Panel>
    <Panel $w={80}>
      <Tools $pad={3}>
        <PasteButton type="button">{I.paste}<span>Paste</span><Caret /></PasteButton>
        <Column>
          <IconButton icon="cut" label="Cut to clipboard" />
          <IconButton icon="copy" label="Copy to clipboard" />
          <IconButton icon="match" label="Match type properties" />
        </Column>
      </Tools>
      <PanelLabel>Clipboard</PanelLabel>
    </Panel>
    <Panel $w={139}>
      <Tools $pad={3}>
        <Column $w={71}>
          {[["cope", "Cope"], ["cutGeo", "Cut"], ["join", "Join"]].map(([icon, label]) => (
            <TextTool type="button" key={label}>{I[icon]}<span>{label}</span><Caret /></TextTool>
          ))}
        </Column>
        <Column>
          <IconButton icon="wallJoin" label="Wall joins" /><IconButton icon="beamJoin" label="Beam joins" /><IconButton icon="paint" label="Split face" />
        </Column>
        <Column>
          <IconButton icon="face" label="Wall opening" /><IconButton icon="splitFace" label="Paint" /><IconButton icon="hammer" label="Demolish" />
        </Column>
        <Middle><More /></Middle>
      </Tools>
      <PanelLabel>Geometry</PanelLabel>
    </Panel>
    <Panel $w={238}>
      <Tools $pad={2}>
        <BigGrid $cell={39} $cols={4}>
          {["align", "offset", "mirrorPick", "mirrorDraw", "move", "copyTool", "rotate", "trim"].map((n) => (
            <IconButton key={n} icon={n} label={n} slot={39} data-big />
          ))}
        </BigGrid>
        <SmallGrid>
          {["split", "splitGap", "unpin", "array", "scale", "pin", "trimOne", "trimMany", "del"].map((n) => (
            <IconButton key={n} icon={n} label={n} slot={25} />
          ))}
        </SmallGrid>
      </Tools>
      <PanelLabel>Modify</PanelLabel>
    </Panel>
    <Panel $w={65}>
      <Tools $pad={2}>
        <Column><IconButton icon="bulb" label="Hide in view" /><IconButton icon="brush" label="Override graphics" /><IconButton icon="box3d" label="Selection box" /></Column>
        <Column $w={12}><More /><More /></Column>
        <Column><IconButton icon="hideHouse" label="Displace elements" /><IconButton icon="lineWork" label="Linework" /></Column>
      </Tools>
      <PanelLabel>View</PanelLabel>
    </Panel>
    <Panel $w={56}>
      <Tools $pad={2}>
        <BigGrid $cell={39} $cols={1}>
          <IconButton icon="measureBig" label="Measure between" slot={39} data-big />
          <IconButton icon="dimBig" label="Dimension" slot={39} data-big />
        </BigGrid>
        <BigGrid $cell={12} $cols={1} $middle><More /><More /></BigGrid>
      </Tools>
      <PanelLabel>Measure</PanelLabel>
    </Panel>
    <Panel $w={80} $last>
      <Tools $pad={3}>
        <BigGrid $cell={38} $cols={2}>
          {["group", "similar", "assembly", "parts"].map((n) => <IconButton key={n} icon={n} label={`Create ${n}`} slot={38} data-big />)}
        </BigGrid>
      </Tools>
      <PanelLabel>Create</PanelLabel>
    </Panel>
  </Ribbon>
);

const ScrollBar = ({ parts }) => (
  <VBar><Chevron dir="up" /><Track $parts={parts}><Thumb /></Track><Chevron /></VBar>
);

const PropertiesPalette = () => (
  <Palette>
    <PaletteTitle>Properties<CloseButton type="button" aria-label="Close properties"><Cross /></CloseButton></PaletteTitle>
    <TypeSelector>
      <Preview>{I.elevBig}</Preview>
      <TypeName>Elevation<br />Building Elevation</TypeName>
      <Caret />
    </TypeSelector>
    <FilterRow>
      <SelectBox $tone="grey">
        <select aria-label="Property filter"><option>Elevation: North Elevation</option></select>
        <Chevron color="#777" />
      </SelectBox>
      <EditType type="button">{I.editType}Edit Type</EditType>
    </FilterRow>
    <Scroller>
      <TableArea>
        <PropTable>
          <colgroup><col width="160" /><col width="158" /><col width="13" /></colgroup>
          <tbody>
            {properties.map((p) => p.group ? (
              <GroupRow key={p.group}><th colSpan={2} scope="colgroup">{p.group}</th><td>{I.collapse}</td></GroupRow>
            ) : (
              <PropRow key={p.name} $dim={p.dim}>
                <th scope="row">{p.check ? <label htmlFor={p.name}>{p.name}</label> : p.name}</th>
                <td>
                  {p.check && <Check type="checkbox" id={p.name} />}
                  {p.button && <CellButton type="button">{p.button}</CellButton>}
                  {p.value}
                </td>
                <td />
              </PropRow>
            ))}
          </tbody>
        </PropTable>
      </TableArea>
      <ScrollBar parts={[151, 275, 2]} />
    </Scroller>
    <PaletteFoot>
      <a href="#help">Properties help</a>
      <Apply type="button" disabled>Apply</Apply>
    </PaletteFoot>
  </Palette>
);

const Browser = () => {
  const [selected, setSelected] = useState("North Elevation");
  return (
    <Palette $grow>
      <PaletteTitle>Project Browser - Ozsvath_Test<CloseButton type="button" aria-label="Close project browser"><Cross /></CloseButton></PaletteTitle>
      <Scroller>
        <Tree>
          {tree.map(([guides, name, icon], i) => (
            <TreeRow key={i}>
              {guides.split("").map((g, n) => (
                <Guide key={n} $kind={g} $end={n === guides.length - 1 && !icon}>
                  {(g === "-" || g === "+") && <Toggle type="button" aria-label={g === "-" ? "Collapse" : "Expand"}>{g === "-" ? <Bar /> : <><Bar /><Bar $up /></>}</Toggle>}
                </Guide>
              ))}
              {icon && <TreeIcon>{I[icon]}</TreeIcon>}
              <Node type="button" $on={name === selected} onClick={() => setSelected(name)}>{name}</Node>
            </TreeRow>
          ))}
        </Tree>
        <ScrollBar parts={[122, 201, 227]} />
      </Scroller>
    </Palette>
  );
};

export default function App() {
  return (
    <>
      <Global />
      <Window>
        <TitleBar>
          <QuickAccess />
          <Title>Autodesk Revit 2022 - Ozsvath_Test - Elevation: North Elevation</Title>
          <Row>
            <Arrow type="button" aria-label="Collapse search"><svg width="4" height="8"><path d="M4 0v8L0 4z" fill="#444" /></svg></Arrow>
            <IconButton icon="binoc" label="Search" />
            <IconButton icon="user" label="Account" />
            <UserName type="button">jfjacques</UserName>
            <More label="Account menu" />
            <Trial type="button">{I.clock}19</Trial>
            <IconButton icon="cart" label="App store" />
            <Sep />
            <IconButton icon="help" label="Help" />
            <More label="Help menu" />
            <WindowButtons>
              <IconButton icon="min" label="Minimize" slot={25} />
              <IconButton icon="restore" label="Restore" slot={25} />
              <Tool type="button" aria-label="Close" $slot={25}><Cross size={12} /></Tool>
            </WindowButtons>
          </Row>
        </TitleBar>
        <TabStrip>
          <FileTab type="button">File</FileTab>
          {ribbonTabs.map(([name, w]) => <RibbonTab type="button" key={name} $w={w} $on={name === "Modify"}>{name}</RibbonTab>)}
          <ModeButton type="button" aria-label="Minimize ribbon">{I.ribbonMode}<Caret color="#111" /></ModeButton>
        </TabStrip>
        <RibbonPanels />
        <OptionsBar />
        <Body>
          <Side>
            <PropertiesPalette />
            <Browser />
          </Side>
          <Main>
            <DocTabs>
              {docTabs.map(([icon, name, w], i) => (
                <DocTab type="button" key={i} $w={w} $on={icon === "elevDark"}>
                  <DocIcon>{I[icon]}</DocIcon>{name}{icon === "elevDark" && <Cross />}
                </DocTab>
              ))}
              <DocMore type="button" aria-label="Tab list">{I.customize}</DocMore>
            </DocTabs>
            <CanvasRow>
              <Canvas>
                <Drawing />
                <NavBar>
                  <NavDot type="button" aria-label="Close navigation bar">×</NavDot>
                  <NavTool type="button" aria-label="Steering wheel" $line>{I.wheel2d}<Caret color="#888" /></NavTool>
                  <NavTool type="button" aria-label="Zoom region">{I.zoomRegion}<Caret color="#888" /></NavTool>
                  <NavDot type="button" aria-label="Customize navigation bar">=</NavDot>
                </NavBar>
              </Canvas>
              <CanvasBar>
                <ScrollBar parts={[560, 16, 558]} />
                <Fringe viewBox="0 0 8 960" fill="none" stroke="#444">
                  <path d="M0 .5h8" stroke="#888" /><path d="M0 1h8v28H0z" fill="#ccc" stroke="none" />
                  <path d="M3 392l5 3M3 488l5 3M3 499l5 3M2 815l6 3M2 825l6 3M2 890l6 4M2 896l6 4M2 906l6 3" />
                </Fringe>
              </CanvasBar>
            </CanvasRow>
            <ViewBar>
              <Scale type="button">3/16" = 1'-0"</Scale>
              {viewControls.map(([icon, label]) => <IconButton key={icon} icon={icon} label={label} slot={21} data-short />)}
              <HBar><Chevron dir="left" /><HTrack><Thumb /></HTrack><Chevron dir="right" /><Grip /></HBar>
            </ViewBar>
          </Main>
        </Body>
        <StatusBar>
          <StatusText>Click to select, TAB for alternates, CTRL adds, SHIFT unselects.</StatusText>
          <StatusGroup>
            {I.workset}
            <SelectBox $tone="white"><select aria-label="Active workset"><option> </option></select><Chevron color="#aaa" /></SelectBox>
            <Count>{I.requests}:0</Count>
            {I.options}
            {I.exclude}
            <SelectBox $tone="white"><select aria-label="Design option"><option>Main Model</option></select><Chevron color="#aaa" /></SelectBox>
          </StatusGroup>
          <SelectTools>
            {selectTools.map(([icon, label]) => <IconButton key={icon} icon={icon} label={label} slot={25} data-short />)}
            <FilterCount type="button">{I.filter}:0</FilterCount>
          </SelectTools>
        </StatusBar>
      </Window>
    </>
  );
}

/* ---------- styles ---------- */

const Global = createGlobalStyle`
  *, *::before, *::after { box-sizing: border-box; }
  body { margin: 0; overflow: hidden; }
  body, button, select, input, th, td { font-family: "Open Sans", "Noto Sans", sans-serif; font-size: 11px; line-height: 16px; color: #111; }
  button { padding: 0; border: 0; background: none; white-space: nowrap; }
  svg { flex: none; display: block; }
`;

const center = css`
  display: flex;
  align-items: center;
  justify-content: center;
`;

const Window = styled.div`
  display: flex;
  flex-direction: column;
  height: 100vh;
  background: #eee;
`;

const TitleBar = styled.header`
  display: flex;
  height: 29px;
  background: #ccc;
`;

const Row = styled.div`
  display: flex;
  height: 24px;
`;

const Title = styled.div`
  flex: 1;
  padding-top: 2px;
  text-align: center;
  color: #444;
`;

const Tool = styled.button`
  ${center}
  width: ${(p) => p.$slot || 24}px;
  height: 24px;
  border: 1px solid ${(p) => (p.$on ? "#0062b8" : "transparent")};
  background: ${(p) => (p.$on ? "#b8d8f3" : "none")};

  &[data-big] { height: 36px; }
  &[data-short] { height: 17px; border: 0; }
`;

const Arrow = styled.button`
  ${center}
  width: 12px;
  height: 24px;
`;

const Gap = styled.span`
  width: 5px;
`;

const Sep = styled.span`
  width: 1px;
  height: 22px;
  margin: 0 3px;
  background: #b5b5b5;
`;

const BigA = styled.span`
  font-size: 18px;
  font-weight: bold;
  color: #444;
`;

const UserName = styled.button`
  width: 80px;
  text-align: left;
  color: #333;
`;

const Trial = styled.button`
  ${center}
  gap: 4px;
  width: 44px;
  height: 22px;
  margin: 1px 2px 0;
  border: 1px solid #0062b8;
  background: #0696d7;
  color: #fff;
`;

const WindowButtons = styled.div`
  display: flex;
  margin-left: 12px;
`;

const TabStrip = styled.nav`
  display: flex;
  height: 20px;
  background: #ccc;
`;

const RibbonTab = styled.button`
  width: ${(p) => p.$w}px;
  background: ${(p) => (p.$on ? "#eee" : "none")};
  color: #333;
`;

const FileTab = styled.button`
  width: 45px;
  margin-right: 2px;
  background: #2a7ab5;
  color: #fff;
`;

const ModeButton = styled.button`
  display: flex;
  align-items: center;
  gap: 4px;
  margin-left: 22px;
`;

const Ribbon = styled.section`
  display: flex;
  height: 96px;
  padding-top: 1px;
  border-bottom: 1px solid #c8c8c8;
`;

const Panel = styled.div`
  width: ${(p) => p.$w}px;
  height: 93px;
  border-right: ${(p) => (p.$last ? 0 : 1)}px solid #d8d8d8;
`;

const Tools = styled.div`
  display: flex;
  justify-content: ${(p) => (p.$center ? "center" : "flex-start")};
  height: 76px;
  padding: 2px 0 0 ${(p) => p.$pad || 0}px;
`;

const PanelLabel = styled.div`
  ${center}
  gap: 6px;
  color: #333;
`;

const Column = styled.div`
  display: flex;
  flex-direction: column;
  width: ${(p) => (p.$w ? `${p.$w}px` : "auto")};
`;

const Middle = styled.div`
  display: flex;
  height: 72px;
  align-items: center;
`;

const ModifyButton = styled.button`
  display: flex;
  flex-direction: column;
  align-items: center;
  gap: 8px;
  width: 44px;
  height: 72px;
  padding-top: 7px;
  border: 1px solid #0062b8;
  background: #b8d8f3;
`;

const PasteButton = styled.button`
  display: flex;
  flex-direction: column;
  align-items: center;
  gap: 4px;
  width: 50px;
  height: 72px;
  padding-top: 3px;
`;

const TextTool = styled.button`
  display: flex;
  align-items: center;
  gap: 5px;
  height: 24px;
  padding-left: 4px;

  span { padding-right: 4px; }
`;

const BigGrid = styled.div`
  display: grid;
  grid-template-columns: repeat(${(p) => p.$cols}, ${(p) => p.$cell}px);
  grid-auto-rows: 36px;
  align-items: ${(p) => (p.$middle ? "center" : "start")};
`;

const SmallGrid = styled.div`
  display: grid;
  grid-template-columns: repeat(3, 25px);
  grid-auto-rows: 24px;
  margin-left: 2px;
`;

const OptionsBar = styled.div`
  height: 26px;
`;

const Body = styled.div`
  display: flex;
  flex: 1;
  min-height: 0;
`;

const Side = styled.aside`
  display: flex;
  flex-direction: column;
  width: 352px;
  border-right: 2px solid #ccc;
`;

const Palette = styled.section`
  display: flex;
  flex-direction: column;
  flex: ${(p) => (p.$grow ? 1 : "none")};
  min-height: 0;
  border-top: 2px solid #ccc;
`;

const PaletteTitle = styled.div`
  display: flex;
  align-items: center;
  justify-content: space-between;
  height: 20px;
  padding: 2px 2px 0 3px;
  color: #444;
`;

const CloseButton = styled.button`
  padding: 3px;
`;

const TypeSelector = styled.div`
  display: flex;
  align-items: center;
  height: 72px;
  margin: 0 2px 0 1px;
  padding: 0 2px;
  border: 1px solid #ccc;
`;

const Preview = styled.div`
  ${center}
  width: 66px;
  height: 66px;
  border: 1px solid #ccc;
`;

const TypeName = styled.div`
  flex: 1;
  padding-left: 4px;
  color: #444;
`;

const FilterRow = styled.div`
  display: flex;
  align-items: center;
  gap: 5px;
  height: 25px;
  padding-left: 1px;
`;

const SelectBox = styled.div`
  display: flex;
  align-items: center;
  width: ${(p) => (p.$tone === "grey" ? 265 : 206)}px;
  height: ${(p) => (p.$tone === "grey" ? 23 : 18)}px;
  padding-right: 4px;
  border: 1px solid ${(p) => (p.$tone === "grey" ? "#adadad" : "#ddd")};
  background: ${(p) => (p.$tone === "grey" ? "#e1e1e1" : "#fff")};

  select {
    flex: 1;
    height: 100%;
    padding: 0 3px;
    border: 0;
    appearance: none;
    background: none;
    color: ${(p) => (p.$tone === "grey" ? "#111" : "#888")};
  }
`;

const EditType = styled.button`
  display: flex;
  align-items: center;
  gap: 5px;
  padding-bottom: 2px;
`;

const Scroller = styled.div`
  display: flex;
  flex: 1;
  min-height: 0;
  padding: 0 2px 0 1px;
`;

const TableArea = styled.div`
  flex: 1;
  height: 456px;
  background: #fff;
`;

const PropTable = styled.table`
  width: 331px;
  table-layout: fixed;
  border-collapse: separate;
  border-spacing: 0;

  th, td { height: 18px; padding: 0; text-align: left; font-weight: normal; line-height: 15px; white-space: pre; vertical-align: top; }
`;

const GroupRow = styled.tr`
  background: #dcdcdc;

  th { padding-left: 2px; line-height: 17px; }
  td { padding-top: 3px; }
`;

const PropRow = styled.tr`
  && th, && td {
    border-right: 1px dotted #666;
    border-bottom: 1px dotted #666;
    color: ${(p) => (p.$dim ? "#777" : "#111")};
  }

  && th { padding-left: 8px; }
  && td { padding-left: 2px; }
`;

const Check = styled.input`
  display: block;
  appearance: none;
  width: 13px;
  height: 13px;
  margin: 3px 0 0 1px;
  border: 1px solid #222;
  background: #fff;
`;

const CellButton = styled.button`
  display: block;
  width: 155px;
  height: 16px;
  margin-top: 1px;
  line-height: 13px;
  border: 1px solid #aaa;
  border-width: 1px 2px 2px 1px;
  background: #e1e1e1;
`;

const VBar = styled.div`
  display: flex;
  flex-direction: column;
  align-items: center;
  width: 16px;
  padding: 4px 0 3px;
  background: #f0f0f0;
`;

const Track = styled.div`
  display: grid;
  flex: 1;
  width: 100%;
  grid-template-rows: ${(p) => p.$parts.map((n) => `${n}fr`).join(" ")};

  > * { grid-row: 2; }
`;

const Thumb = styled.div`
  background: #ccc;
`;

const PaletteFoot = styled.div`
  display: flex;
  align-items: center;
  justify-content: space-between;
  height: 28px;
  padding: 0 4px 2px 3px;

  a { color: #0066cc; }
`;

const Apply = styled.button`
  width: 73px;
  height: 21px;
  border: 1px solid #bfbfbf;
  background: #ccc;
  color: #838383;
`;

const Tree = styled.ul`
  flex: 1;
  margin: 0;
  padding: 0;
  overflow: hidden;
  list-style: none;
  background: #fff;
`;

const TreeRow = styled.li`
  display: flex;
  height: 18px;
`;

const dotsDown = "repeating-linear-gradient(to bottom, #999 0 1px, transparent 1px 2px)";
const dotsAcross = "repeating-linear-gradient(to right, #999 0 1px, transparent 1px 2px)";

const Guide = styled.span`
  flex: none;
  width: ${(p) => (p.$end ? 23 : 20)}px;
  padding: 6px 0 0 4px;
  background-image: ${dotsDown}, ${dotsAcross};
  background-repeat: no-repeat;
  background-position: 8px 0, 8px 10px;
  background-size: 1px ${(p) => (p.$kind === "l" || p.$kind === "+" ? "10px" : "18px")}, ${(p) => (p.$kind === "v" ? "0 0" : "14px 1px")};
`;

const Toggle = styled.button`
  display: grid;
  place-items: center;
  width: 9px;
  height: 9px;
  border: 1px solid #919191;
  background: #fff;
`;

const Bar = styled.i`
  grid-area: 1 / 1;
  width: ${(p) => (p.$up ? 1 : 5)}px;
  height: ${(p) => (p.$up ? 5 : 1)}px;
  background: #2c4a9c;
`;

const TreeIcon = styled.span`
  display: flex;
  align-items: center;
  width: 19px;
`;

const Node = styled.button`
  padding: 0 3px;
  line-height: 18px;
  font-weight: ${(p) => (p.$on ? "bold" : "normal")};
  background: ${(p) => (p.$on ? "#dfdfdf" : "none")};
`;

const Main = styled.main`
  display: flex;
  flex: 1;
  flex-direction: column;
  min-width: 0;
  background: #fff;
`;

const DocTabs = styled.div`
  display: flex;
  height: 22px;
  padding-top: 2px;
  background: #ccc;
`;

const DocTab = styled.button`
  display: flex;
  align-items: center;
  gap: 7px;
  width: ${(p) => p.$w}px;
  padding: 2px 5px 0;
  background: ${(p) => (p.$on ? "#fff" : "none")};
  font-weight: ${(p) => (p.$on ? "bold" : "normal")};
  color: ${(p) => (p.$on ? "#222" : "#444")};
`;

const DocIcon = styled.span`
  ${center}
  width: 16px;
`;

const DocMore = styled.button`
  margin-left: auto;
  padding-right: 3px;
`;

const CanvasRow = styled.div`
  display: flex;
  flex: 1;
  min-height: 0;
`;

const Canvas = styled.div`
  position: relative;
  flex: 1;
  overflow: hidden;
`;

const Sheet = styled.svg`
  width: 100%;
  height: 100%;
`;

const NavBar = styled.div`
  position: absolute;
  top: 2px;
  right: 1px;
  display: flex;
  flex-direction: column;
  width: 36px;
  height: 118px;
  padding: 2px;
  border: 2px solid #bdbdbd;
  border-radius: 5px;
  background: #f5f5f5;
`;

const NavDot = styled.button`
  align-self: flex-end;
  width: 8px;
  height: 8px;
  border-radius: 4px;
  background: #b8b8b8;
  color: #fff;
  font-size: 8px;
  line-height: 8px;
`;

const NavTool = styled.button`
  display: flex;
  flex: 1;
  flex-direction: column;
  align-items: center;
  justify-content: flex-end;
  gap: ${(p) => (p.$line ? 8 : 10)}px;
  padding-bottom: ${(p) => (p.$line ? 4 : 10)}px;
  border-bottom: ${(p) => (p.$line ? 1 : 0)}px solid #bbb;
`;

const CanvasBar = styled.div`
  position: relative;
  display: flex;
  padding-top: 2px;
`;

const Fringe = styled.svg`
  position: absolute;
  top: 109px;
  right: 0;
  width: 8px;
  height: 960px;
`;

const ViewBar = styled.div`
  display: flex;
  height: 19px;
  padding-left: 2px;
  border-bottom: 2px solid #fff;
  background: #f0f0f0;
`;

const Scale = styled.button`
  width: 76px;
  padding-left: 8px;
  text-align: left;
`;

const HBar = styled.div`
  display: flex;
  flex: 1;
  align-items: center;
  padding: 0 2px 0 4px;
`;

const HTrack = styled.div`
  display: grid;
  flex: 1;
  height: 15px;
  grid-template-columns: 917fr 17fr 919fr;

  > * { grid-column: 2; }
`;

const Grip = styled.span`
  width: 10px;
  height: 10px;
  margin-left: 10px;
  background: conic-gradient(#bbb 25%, transparent 0) 0 0 / 4px 4px;
  clip-path: polygon(100% 0, 100% 100%, 0 100%);
`;

const StatusBar = styled.footer`
  display: flex;
  align-items: center;
  height: 24px;
  background: #ccc;
`;

const StatusText = styled.div`
  flex: 0 0 60%;
  padding-left: 1px;
`;

const StatusGroup = styled.div`
  display: flex;
  align-items: center;
  gap: 8px;
`;

const Count = styled.div`
  display: flex;
  gap: 4px;
  width: 46px;
`;

const SelectTools = styled.div`
  display: flex;
  align-items: center;
  margin-left: auto;
  padding-right: 72px;
`;

const FilterCount = styled.button`
  display: flex;
  align-items: center;
  gap: 1px;
  padding-left: 7px;
`;
